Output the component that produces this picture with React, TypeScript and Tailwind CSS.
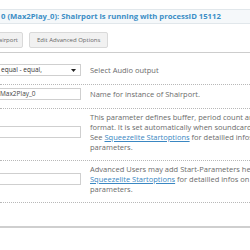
function Row({ control, children }: any) {
  return (
    <div className="flex items-center pt-[3px] pb-[8px] border-b border-dotted border-[#b8b8b8]">
      <div className="w-[90px] shrink-0 flex justify-end pr-[9px]">{control}</div>
      <div className="text-[7.5px] leading-[10px] text-[#6b6b6b] whitespace-nowrap">{children}</div>
    </div>
  );
}

function TextBox({ value }: any) {
  return (
    <div className="w-[120px] h-[12px] shrink-0 border border-[#cfcfcf] bg-white flex items-center pl-[38px] text-[6.5px] text-[#444]">
      {value}
    </div>
  );
}

const Link = ({ children }: any) => (
  <span className="text-[#3a87c2] underline">{children}</span>
);

export default function App() {
  return (
    <div className="w-[250px] h-[250px] overflow-hidden bg-white font-['Open_Sans',sans-serif]">
      <div className="h-[9px]" />
      <div className="h-[15px] border-y border-[#e1e7eb] bg-[#f5f8fa] flex items-center pl-px whitespace-nowrap text-[7.7px] font-bold text-[#3b8ec6]">
        0 (Max2Play_0): Shairport is running with processID 15112
      </div>

      <div className="flex gap-[6px] mt-[8px] pb-[4px] border-b border-[#cdcdcd]">
        <button className="w-[64px] ml-[-41px] h-[16px] shrink-0 flex items-center justify-end pr-[4px] rounded-[2px] border border-[#d9d9d9] bg-[#f1f1f1] text-[6px] text-[#666] whitespace-nowrap">
          Restart Shairport
        </button>
        <button className="h-[16px] px-[7px] flex items-center rounded-[2px] border border-[#d9d9d9] bg-[#f1f1f1] text-[6px] text-[#666] whitespace-nowrap">
          Edit Advanced Options
        </button>
      </div>

      <div className="pt-[8px]">
        <Row
          control={
            <div className="w-[120px] h-[12px] shrink-0 border border-[#cfcfcf] bg-white flex items-center justify-between pl-[39px] pr-[4px] text-[6.5px] text-[#333]">
              <span>equal - equal,</span>
              <svg width="5" height="3" viewBox="0 0 5 3">
                <path d="M0 0h5L2.5 3z" fill="#222" />
              </svg>
            </div>
          }
        >
          Select Audio output
        </Row>
        <Row control={<TextBox value="Max2Play_0" />}>Name for instance of Shairport.</Row>
        <Row control={<TextBox value="" />}>
          This parameter defines buffer, period count and sample
          <br />
          format. It is set automatically when soundcard is chosen.
          <br />
          See <Link>Squeezelite Startoptions</Link> for detailled infos on the
          <br />
          parameters.
        </Row>
        <Row control={<TextBox value="" />}>
          Advanced Users may add Start-Parameters here. See
          <br />
          <Link>Squeezelite Startoptions</Link> for detailled infos on the
          <br />
          parameters.
        </Row>
      </div>

      <div className="mt-[23px] border-t-2 border-[#cfcfcf]" />
    </div>
  );
}
